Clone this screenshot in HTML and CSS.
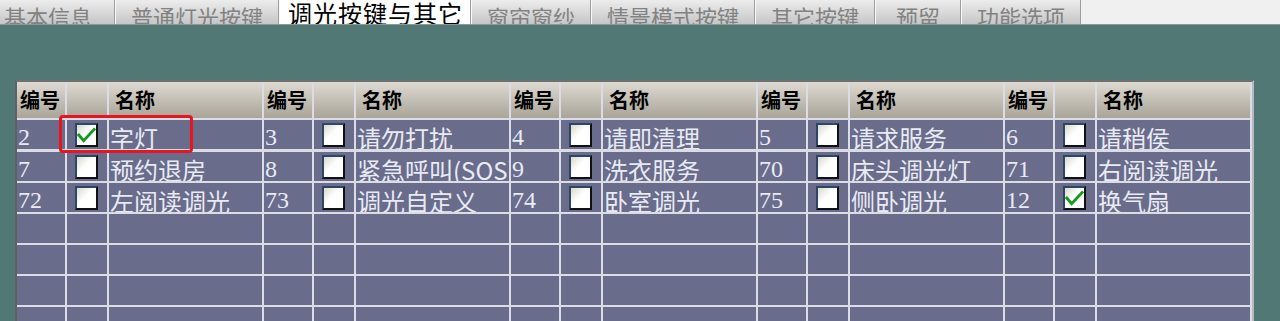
FILE: index.html
```html
<!DOCTYPE html>
<html lang="zh-CN">
<head>
    <meta charset="UTF-8">
    <meta name="viewport" content="width=device-width, initial-scale=1.0">
    <title>调光按键与其它</title>
    <link rel="stylesheet" href="styles.css">
</head>
<body>
    <div class="tabs">
        <div class="tab tab-first">基本信息</div>
        <div class="tab">普通灯光按键</div>
        <div class="tab active">调光按键与其它</div>
        <div class="tab">窗帘窗纱</div>
        <div class="tab">情景模式按键</div>
        <div class="tab">其它按键</div>
        <div class="tab tab-short">预留</div>
        <div class="tab">功能选项</div>
    </div>

    <div class="panel">
        <div class="grid">
            <div class="head">编号</div><div class="head"></div><div class="head head-name">名称</div>
            <div class="head">编号</div><div class="head"></div><div class="head head-name">名称</div>
            <div class="head">编号</div><div class="head"></div><div class="head head-name">名称</div>
            <div class="head">编号</div><div class="head"></div><div class="head head-name">名称</div>
            <div class="head">编号</div><div class="head"></div><div class="head head-name">名称</div>

            <!-- 第一行 -->
            <div class="cell num">2</div><div class="cell"><span class="box"><svg viewBox="0 0 20 20"><polyline points="1,9 7,16 19,3"/></svg></span></div><div class="cell name">字灯</div>
            <div class="cell num">3</div><div class="cell"><span class="box"></span></div><div class="cell name">请勿打扰</div>
            <div class="cell num">4</div><div class="cell"><span class="box"></span></div><div class="cell name">请即清理</div>
            <div class="cell num">5</div><div class="cell"><span class="box"></span></div><div class="cell name">请求服务</div>
            <div class="cell num">6</div><div class="cell"><span class="box"></span></div><div class="cell name">请稍侯</div>

            <!-- 第二行 -->
            <div class="cell num">7</div><div class="cell"><span class="box"></span></div><div class="cell name">预约退房</div>
            <div class="cell num">8</div><div class="cell"><span class="box"></span></div><div class="cell name">紧急呼叫(SOS)</div>
            <div class="cell num">9</div><div class="cell"><span class="box"></span></div><div class="cell name">洗衣服务</div>
            <div class="cell num">70</div><div class="cell"><span class="box"></span></div><div class="cell name">床头调光灯</div>
            <div class="cell num">71</div><div class="cell"><span class="box"></span></div><div class="cell name">右阅读调光</div>

            <!-- 第三行 -->
            <div class="cell num">72</div><div class="cell"><span class="box"></span></div><div class="cell name">左阅读调光</div>
            <div class="cell num">73</div><div class="cell"><span class="box"></span></div><div class="cell name">调光自定义</div>
            <div class="cell num">74</div><div class="cell"><span class="box"></span></div><div class="cell name">卧室调光</div>
            <div class="cell num">75</div><div class="cell"><span class="box"></span></div><div class="cell name">侧卧调光</div>
            <div class="cell num">12</div><div class="cell"><span class="box"><svg viewBox="0 0 20 20"><polyline points="1,9 7,16 19,3"/></svg></span></div><div class="cell name">换气扇</div>
        </div>
        <div class="mark"></div>
    </div>

    <script>
    // 空行补齐到底部
    var grid = document.querySelector('.grid');
    for (var i = 0; i < 4 * 15; i++) {
        var c = document.createElement('div');
        c.className = 'cell';
        grid.appendChild(c);
    }
    </script>
</body>
</html>
```

FILE: styles.css
```css
body {
    margin: 0;
    height: 321px;
    overflow: hidden;
    background-color: #527876;
    font-family: "Noto Sans CJK SC", sans-serif;
}
.tabs {
    display: flex;
    height: 25px;
    overflow: hidden;
    background-color: #f0f0f0;
    border-bottom: 1px solid #8a9a98;
    box-sizing: border-box;
}
.tab {
    padding: 3px 15px 0;
    font-size: 22px;
    line-height: 26px;
    color: #828282;
    white-space: nowrap;
    background: linear-gradient(#ececec, #c6c6c6);
    border-left: 1px solid #fafafa;
    border-right: 1px solid #9c9c9c;
}
.tab-first {
    padding-left: 4px;
    padding-right: 22px;
    border-left: none;
}
.tab-short {
    padding: 3px 20px 0;
}
.tab.active {
    padding: 0 7px 0 8px;
    font-size: 24px;
    letter-spacing: 1px;
    color: #000;
    background: #fff;
}
.panel {
    position: relative;
    padding: 55px 0 0 15px;
}
.grid {
    display: grid;
    grid-template-columns: repeat(5, 48px 40px 153px);
    grid-template-rows: 36px 30px repeat(8, 29px);
    gap: 2px;
    width: max-content;
    padding-right: 2px;
    background-color: #dcdce6;
    border-left: 2px solid #5e6262;
    border-top: 2px solid #6e7070;
    border-right: 2px solid #b8b8c4;
}
.head {
    background: linear-gradient(#dedad2, #a8a498);
    font-size: 20px;
    font-weight: bold;
    line-height: 36px;
    padding-left: 3px;
    color: #000;
    white-space: nowrap;
}
.head-name {
    padding-left: 6px;
}
.cell {
    background-color: #6a6c8c;
    color: #e8eaf4;
    font-size: 24px;
    line-height: 29px;
    padding-top: 3px;
    height: 26px;
    overflow: hidden;
    white-space: nowrap;
}
.num {
    font-family: "Liberation Serif", "Noto Sans CJK SC", serif;
    padding-left: 1px;
}
.name {
    padding-left: 1px;
}
.box {
    display: block;
    width: 19px;
    height: 20px;
    margin-left: 8px;
    background: linear-gradient(135deg, #d8d8cc 0%, #ffffff 45%, #ffffff 100%);
    border: 2px solid #111;
    border-top-color: #2c4664;
    border-left-color: #2c4664;
}
.box svg {
    display: block;
    width: 19px;
    height: 20px;
}
.box polyline {
    fill: none;
    stroke: #129a1a;
    stroke-width: 3;
}
.mark {
    position: absolute;
    left: 59px;
    top: 90px;
    width: 128px;
    height: 32px;
    border: 3px solid #e8141e;
    border-radius: 4px;
}
```
